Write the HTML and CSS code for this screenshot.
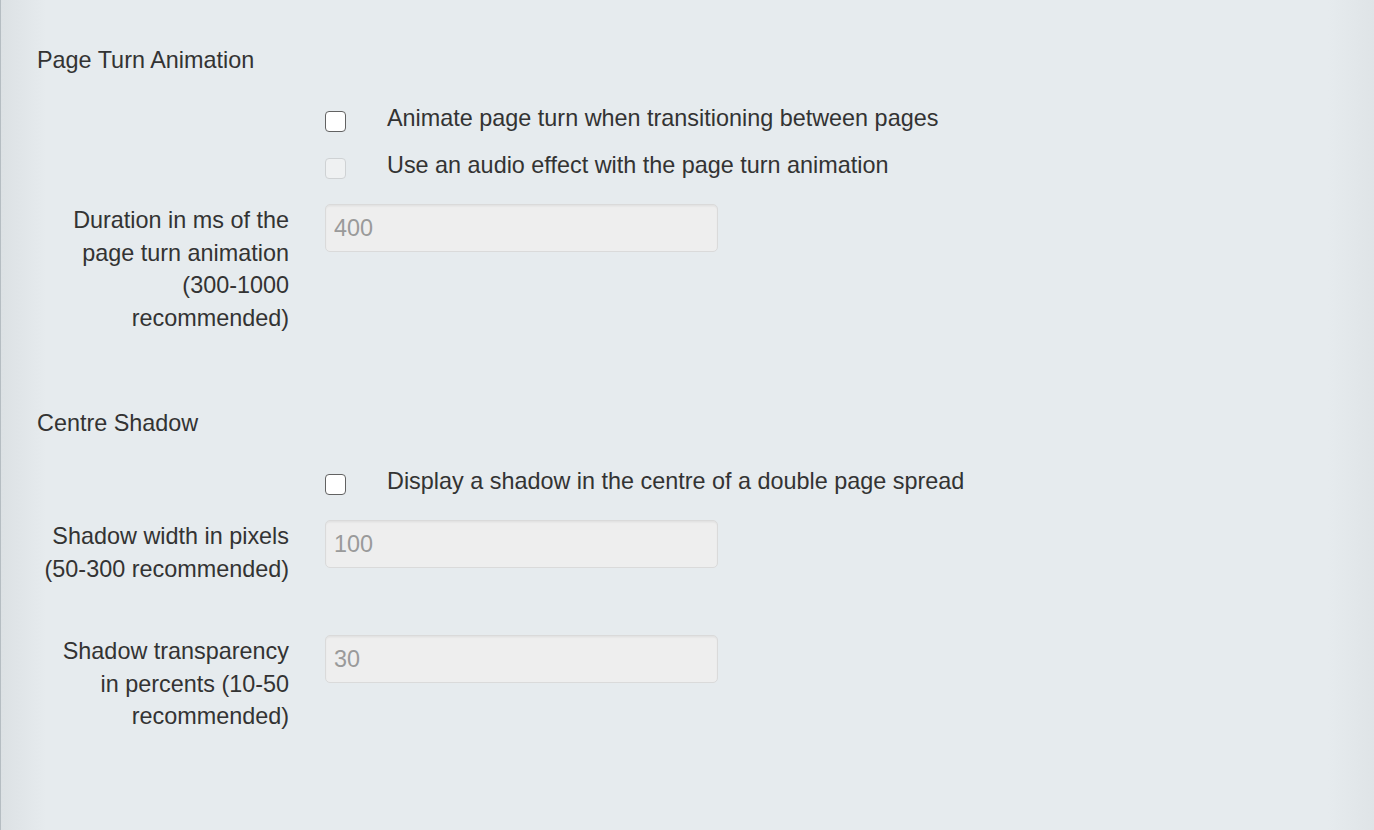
FILE: index.html
```html
<!DOCTYPE html>
<html lang="en">
<head>
  <meta charset="UTF-8">
  <meta name="viewport" content="width=device-width, initial-scale=1.0">
  <title>Page Turn Settings</title>
  <link rel="stylesheet" href="styles.css">
</head>
<body>
  <main class="panel">
    <section class="settings">
      <h3 class="settings-title">Page Turn Animation</h3>

      <div class="form-row check-row first">
        <div class="label-col"></div>
        <label class="field-col check">
          <input type="checkbox" class="box">
          <span>Animate page turn when transitioning between pages</span>
        </label>
      </div>

      <div class="form-row check-row">
        <div class="label-col"></div>
        <label class="field-col check">
          <input type="checkbox" class="box" disabled>
          <span>Use an audio effect with the page turn animation</span>
        </label>
      </div>

      <div class="form-row input-row">
        <label class="label-col" for="duration">Duration in ms of the page turn animation (300-1000 recommended)</label>
        <div class="field-col">
          <input type="text" id="duration" class="text-input" value="400" disabled>
        </div>
      </div>
    </section>

    <section class="settings second">
      <h3 class="settings-title">Centre Shadow</h3>

      <div class="form-row check-row first">
        <div class="label-col"></div>
        <label class="field-col check">
          <input type="checkbox" class="box">
          <span>Display a shadow in the centre of a double page spread</span>
        </label>
      </div>

      <div class="form-row input-row">
        <label class="label-col" for="shadowWidth">Shadow width in pixels (50-300 recommended)</label>
        <div class="field-col">
          <input type="text" id="shadowWidth" class="text-input" value="100" disabled>
        </div>
      </div>

      <div class="form-row input-row spaced">
        <label class="label-col" for="shadowAlpha">Shadow transparency in percents (10-50 recommended)</label>
        <div class="field-col">
          <input type="text" id="shadowAlpha" class="text-input" value="30" disabled>
        </div>
      </div>
    </section>
  </main>
</body>
</html>
```

FILE: styles.css
```css
html, body {
  height: 100%;
}
body {
  margin: 0;
  font-family: 'Liberation Sans', Arial, Helvetica, sans-serif;
  font-size: 23.4px;
  line-height: 32.5px;
  color: #333;
  background-color: #e6ebee;
  background-image:
    linear-gradient(to right, #b5bdc2 0, #b5bdc2 1px, #dce1e4 1px, #e6ebee 46px, #e6ebee calc(100% - 46px), #dfe4e7 100%);
}
.panel {
  padding: 0 0 0 37px;
}
.settings {
  padding-top: 44px;
}
.settings.second {
  padding-top: 73px;
}
.settings-title {
  margin: 0;
  font-size: 23.4px;
  font-weight: normal;
  line-height: 32.5px;
}
.form-row {
  display: flex;
  margin-top: 14.5px;
}
.form-row.first {
  margin-top: 25.5px;
}
.input-row {
  margin-top: 22.5px;
}
.input-row.spaced {
  margin-top: 50px;
}
.label-col {
  width: 247px;
  flex-shrink: 0;
  padding: 0 36px 0 5px;
  text-align: right;
}
.field-col {
  flex: 1;
}
.check {
  display: flex;
  align-items: flex-start;
  cursor: pointer;
}
.box {
  appearance: none;
  -webkit-appearance: none;
  width: 21px;
  height: 21px;
  margin: 9px 41px 0 0;
  border: 1.5px solid #626262;
  border-radius: 4px;
  background: #fff;
  flex-shrink: 0;
}
.box:disabled {
  border-color: #cfd2d4;
  background: #eff1f2;
}
.text-input {
  box-sizing: border-box;
  width: 393px;
  height: 48px;
  margin: 0;
  padding: 0 8px;
  font-family: inherit;
  font-size: 23.4px;
  color: #9a9a9a;
  background: #eeeeee;
  border: 1px solid #dadada;
  border-radius: 5px;
  box-shadow: inset 0 1.5px 1.5px rgba(0, 0, 0, 0.05);
}
```
